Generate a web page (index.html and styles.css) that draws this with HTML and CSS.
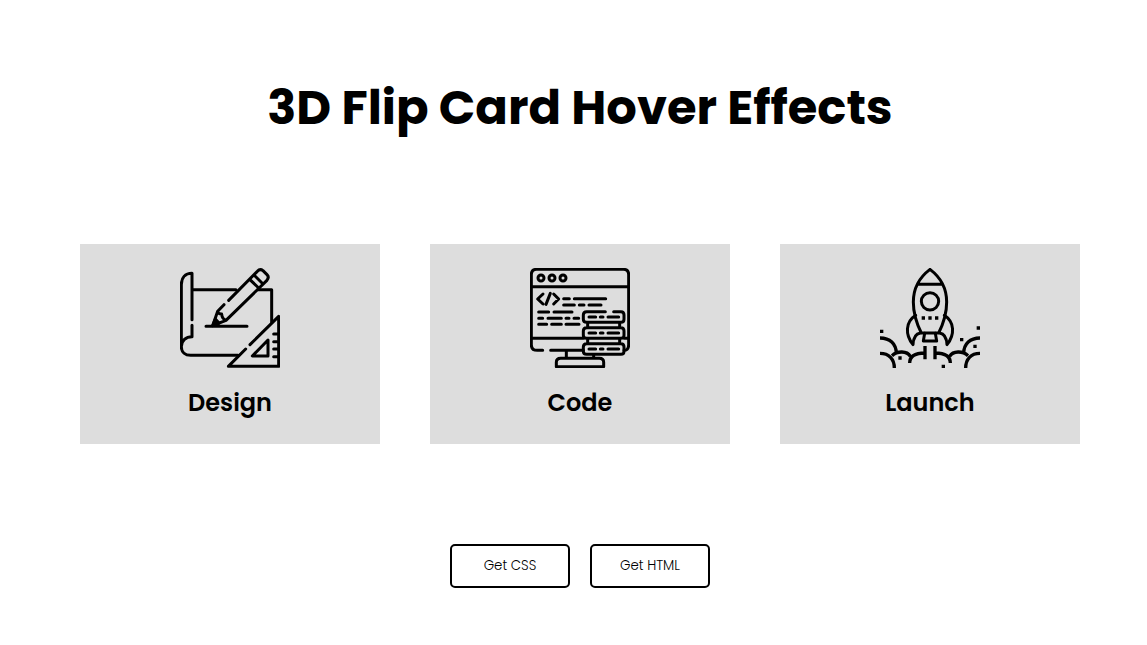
FILE: index.html
```html
<!DOCTYPE html>
<html lang="en">
<head>
<meta charset="utf-8">
<meta name="viewport" content="width=device-width, initial-scale=1">
<title>3D Flip Card Hover Effects</title>
<link rel="stylesheet" href="styles.css">
</head>
<body>
<main class="page">
  <h1 class="title">3D Flip Card Hover Effects</h1>
  <section class="cards">
    <article class="card">
      <svg class="icon" viewBox="30 30 300 300" aria-hidden="true">
        <path d="M66 185V46C45 46 34 60 34 80V266C34 283 46 292 62 292H204M66 202V236C48 236 34 248 34 266M66 95H198M264 95H305V192"/>
        <path d="M108 205H231M176 127L262 40Q270 31 279 38L291 50Q299 58 290 68L168 187L128 203L143 160L162 140M143 160Q144 168 155 168Q156 183 168 187M239 64L266 90M252 51L279 78"/>
        <path d="M128 203L136 183L147 195Z" class="solid"/>
        <path d="M240 260L326 175V325H175L227 273M247 294H294V246ZM311 228H326M311 251H326M311 273H326M311 296H326"/>
      </svg>
      <h2 class="name">Design</h2>
    </article>
    <article class="card">
      <svg class="icon" viewBox="30 30 300 300" aria-hidden="true">
        <path d="M68 277H52Q34 277 34 260V50Q34 34 50 34H310Q326 34 326 50V260Q326 277 312 277M34 86H326M34 241H190M313 241H326M92 277H190M139 278V301M221 290V301M122 301H238Q251 301 251 313V326H109V313Q109 301 122 301Z"/>
        <circle cx="63" cy="60" r="9"/><circle cx="96" cy="60" r="9"/><circle cx="129" cy="60" r="9"/>
        <path d="M69 108L53 123L69 138M91 106L78 139M101 108L116 123L101 138"/>
        <path d="M131 122H148M163 122H257M131 141H163M178 141H192M207 141H243M56 162H86M102 162H156M56 181H68M84 181H124M138 181H147M162 181H176M56 199H80M95 199H124M138 199H177"/>
        <path d="M256 161H200Q190 161 190 171V184Q190 193 200 193H303Q312 193 312 184V171Q312 161 303 161H281M200 209H303Q312 209 312 219V232Q312 241 303 241H200Q190 241 190 232V219Q190 209 200 209ZM200 257H303Q312 257 312 267V280Q312 289 303 289H200Q190 289 190 280V267Q190 257 200 257ZM203 193V209M299 193V209M203 241V257M299 241V257"/>
        <path d="M207 177H227M241 177H249M264 177H296M207 225H227M241 225H249M264 225H296M207 273H227M241 273H249M264 273H296"/>
      </svg>
      <h2 class="name">Code</h2>
    </article>
    <article class="card">
      <svg class="icon" viewBox="30 30 300 300" aria-hidden="true">
        <path d="M180 34C151 56 130 88 130 132C130 168 141 199 154 225H206C219 199 230 168 230 132C230 88 209 56 180 34ZM143 79H217"/>
        <circle cx="180" cy="130" r="26"/>
        <path d="M137 172C106 192 105 230 129 260C130 242 137 227 151 225M223 172C254 192 255 230 231 260C230 242 223 227 209 225M164 226L160 249H200L196 226"/>
        <path class="smoke" d="M30 240C59 240 79 257 79 287M30 286C57 286 73 303 73 330M66 293C82 278 111 278 121 295M119 315C119 294 134 285 165 285M165 264V304M195 264V304M195 285C226 285 241 294 241 315M239 295C249 278 278 278 294 293M281 287C281 257 301 240 330 240M287 330C287 303 303 286 330 286"/>
        <path class="solid dots" d="M155 175h10v10h-10zM175 175h10v10h-10zM195 175h10v10h-10zM30 215h10v10h-10zM320 205h10v10h-10zM270 240h10v10h-10zM310 260h10v10h-10zM85 295h10v10h-10zM215 320h10v10h-10z"/>
      </svg>
      <h2 class="name">Launch</h2>
    </article>
  </section>
  <div class="actions">
    <button class="button" type="button">Get CSS</button>
    <button class="button" type="button">Get HTML</button>
  </div>
</main>
</body>
</html>
```
FILE: styles.css
```css
* {
  box-sizing: border-box;
}

body {
  margin: 0;
  background: #fff;
  color: #000;
  font-family: Poppins, Inter, "Open Sans", sans-serif;
}

.page {
  display: flex;
  flex-direction: column;
  align-items: center;
  padding: 72px 67px 56px 80px;
}

.title {
  margin: 0 0 100px;
  font-size: 48px;
  line-height: 72px;
  font-weight: 700;
  text-align: center;
}

.cards {
  display: flex;
  flex-wrap: wrap;
  justify-content: center;
  gap: 50px;
}

.card {
  display: flex;
  flex-direction: column;
  align-items: center;
  gap: 17px;
  width: 300px;
  padding: 24px 0 23px;
  background: #ddd;
}

.icon {
  width: 100px;
  height: 100px;
  fill: none;
  stroke: #000;
  stroke-width: 9;
  stroke-linecap: round;
  stroke-linejoin: round;
}

.icon .solid {
  fill: #000;
}

.icon .smoke {
  stroke-width: 10;
  stroke-linecap: butt;
}

.icon .dots {
  stroke: none;
}

.name {
  margin: 0;
  font-size: 24px;
  line-height: 36px;
  font-weight: 600;
}

.actions {
  display: flex;
  flex-wrap: wrap;
  justify-content: center;
  gap: 20px;
  margin-top: 100px;
}

.button {
  width: 120px;
  padding: 10px 0;
  border: 2px solid #000;
  border-radius: 5px;
  background: #fff;
  color: #000;
  font-family: inherit;
  line-height: 20px;
  font-weight: 300;
  cursor: pointer;
}
```
